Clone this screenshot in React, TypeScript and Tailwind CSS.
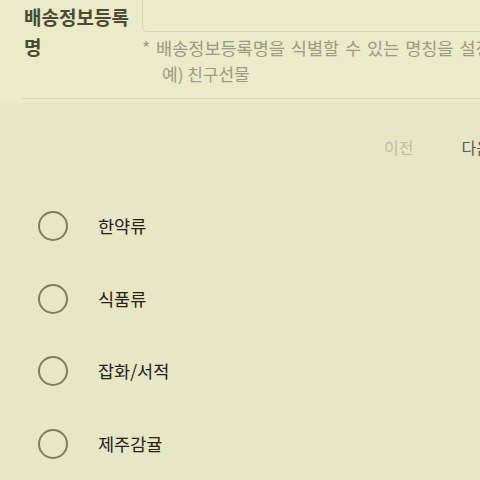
const font = { fontFamily: '"Noto Sans CJK KR", "Noto Sans", sans-serif' }

const options = ["한약류", "식품류", "잡화/서적", "제주감귤"]

export default function App() {
  return (
    <div className="w-[480px] h-[480px] overflow-hidden bg-[#e7e6c5]" style={font}>
      {/* form section */}
      <div className="bg-[#ebeac9] pl-[22px] h-[103px]">
        <div className="flex border-b border-[#d9d8b6] h-[99px]">
          <div className="w-[120px] shrink-0 pl-[2px] pr-[6px] pt-[2px] text-[19px] leading-[30px] font-bold text-[#4a4a32]">
            배송정보등록명
          </div>
          <div className="flex-1 min-w-0">
            <div className="-mt-[10px] h-[42px] w-[360px] rounded-[5px] border border-[#d5d4b3] bg-[#ebeac9]"></div>
            <div className="mt-[2px] text-[17.5px] leading-[28px] text-[#9b9a82] whitespace-nowrap [word-spacing:2px]">
              * 배송정보등록명을 식별할 수 있는 명칭을 설정하세요.
            </div>
            <div className="pl-[20px] text-[17px] leading-[24px] text-[#9b9a82] whitespace-nowrap">예) 친구선물</div>
          </div>
        </div>
      </div>

      {/* pager */}
      <div className="flex h-[87px] items-center pl-[384px] gap-[48px] text-[16px] whitespace-nowrap">
        <span className="text-[#bdbca6]">이전</span>
        <span className="text-[#55566a]">다음</span>
      </div>

      {/* radio list */}
      <div className="flex flex-col pl-[38px]">
        {options.map((o) => (
          <label key={o} className="flex items-center h-[72.5px] gap-[30px]">
            <span className="w-[30px] h-[30px] rounded-full border-2 border-[#7d7d60]"></span>
            <span className="text-[17.5px] text-[#23231a]">{o}</span>
          </label>
        ))}
      </div>
    </div>
  )
}
